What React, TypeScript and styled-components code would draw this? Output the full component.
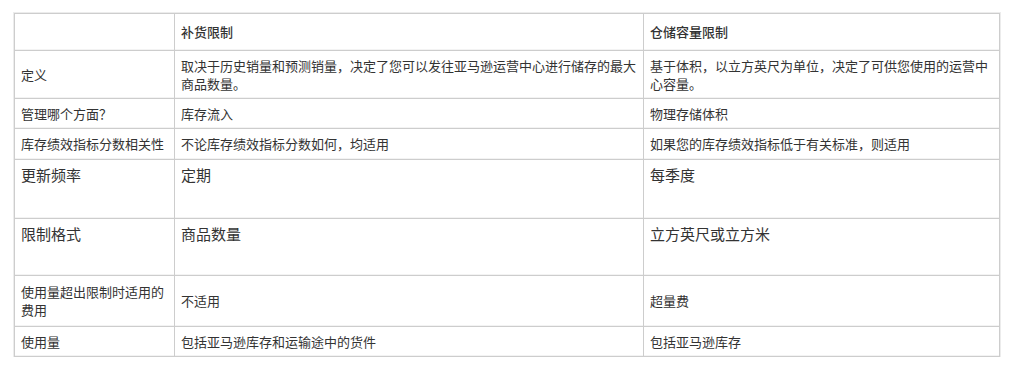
import styled, { createGlobalStyle } from 'styled-components';

const GlobalStyle = createGlobalStyle`
  html, body {
    margin: 0;
    padding: 0;
    background: #fff;
  }
  body {
    font-family: "Noto Sans CJK SC", "Liberation Sans", sans-serif;
    color: #333;
  }
`;

const Page = styled.div`
  padding: 13px 0 0 14px;
`;

const Table = styled.table`
  border-collapse: collapse;
  table-layout: fixed;
  width: 985px;
  outline: 1px solid #ececec;
  outline-offset: 0px;
`;

const Col = styled.col<{ $w: number }>`
  width: ${p => p.$w}px;
`;

const Row = styled.tr<{ $h: number }>`
  height: ${p => p.$h}px;
`;

const Cell = styled.td<{ $big?: boolean; $top?: boolean; $head?: boolean }>`
  border: 1px solid #cdcdcd;
  padding: ${p => (p.$top ? '4px' : '5px')} 6px 5px 6px;
  font-size: ${p => (p.$big ? '15px' : '13px')};
  line-height: ${p => (p.$big ? '22px' : '18px')};
  font-weight: ${p => (p.$head ? 500 : 400)};
  vertical-align: ${p => (p.$top ? 'top' : 'middle')};
  color: #333;
  box-shadow: inset 0 -1px 0 #f3f3f3;
`;

type RowData = {
  h: number;
  cells: [string, string, string];
  big?: boolean;
  top?: boolean;
};

const rows: RowData[] = [
  {
    h: 48,
    cells: [
      '定义',
      '取决于历史销量和预测销量，决定了您可以发往亚马逊运营中心进行储存的最大商品数量。',
      '基于体积，以立方英尺为单位，决定了可供您使用的运营中心容量。',
    ],
  },
  { h: 30, cells: ['管理哪个方面？', '库存流入', '物理存储体积'] },
  {
    h: 31,
    cells: ['库存绩效指标分数相关性', '不论库存绩效指标分数如何，均适用', '如果您的库存绩效指标低于有关标准，则适用'],
  },
  { h: 59, cells: ['更新频率', '定期', '每季度'], big: true, top: true },
  { h: 57, cells: ['限制格式', '商品数量', '立方英尺或立方米'], big: true, top: true },
  { h: 51, cells: ['使用量超出限制时适用的费用', '不适用', '超量费'] },
  { h: 30, cells: ['使用量', '包括亚马逊库存和运输途中的货件', '包括亚马逊库存'] },
];

export default function App() {
  return (
    <Page>
      <GlobalStyle />
      <Table>
        <colgroup>
          <Col $w={160} />
          <Col $w={469} />
          <Col $w={356} />
        </colgroup>
        <tbody>
          <Row $h={37}>
            <Cell />
            <Cell $head>补货限制</Cell>
            <Cell $head>仓储容量限制</Cell>
          </Row>
          {rows.map((r, i) => (
            <Row key={i} $h={r.h}>
              {r.cells.map((c, j) => (
                <Cell key={j} $big={r.big} $top={r.top}>
                  {c}
                </Cell>
              ))}
            </Row>
          ))}
        </tbody>
      </Table>
    </Page>
  );
}
